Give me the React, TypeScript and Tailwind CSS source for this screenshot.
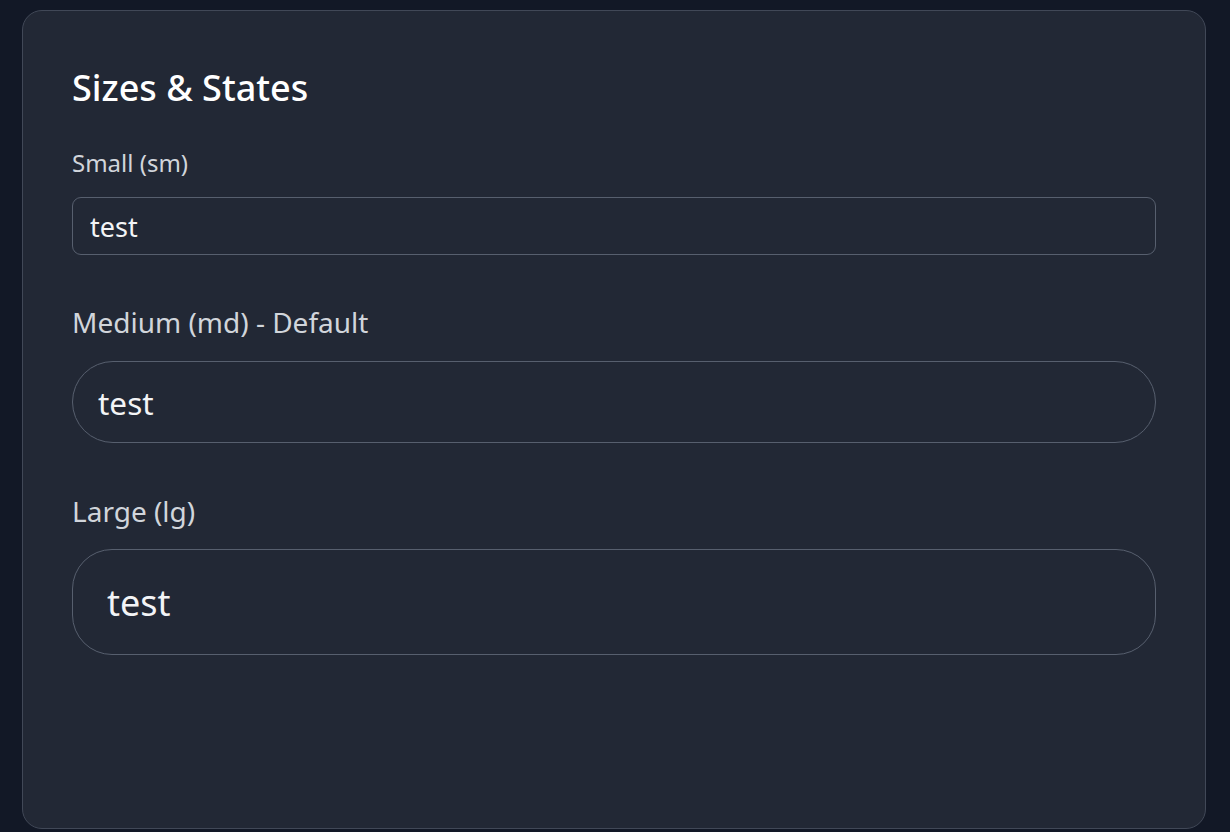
export default function App() {
  const font = { fontFamily: '"Noto Sans", "Open Sans", sans-serif' };

  return (
    <div className="min-h-screen bg-[#121826] pl-[22px] pr-[24px] pt-[10px]" style={font}>
      <section className="h-[819px] rounded-[20px] border-[1.5px] border-[#414857] bg-[#222835] px-[49px] pt-[50px]">
        <h2 className="text-[36px] leading-[54px] font-medium text-white">Sizes &amp; States</h2>

        <div className="mt-[30px] flex flex-col gap-[46px]">
          {/* Small */}
          <div className="flex flex-col gap-[16px]">
            <label className="text-[24px] leading-[36px] text-[#d1d5db]">Small (sm)</label>
            <input
              defaultValue="test"
              className="h-[58px] w-full rounded-[9px] border-[1.5px] border-[#575f6e] bg-transparent px-[17px] text-[27px] text-[#f3f4f6] outline-none"
            />
          </div>

          {/* Medium */}
          <div className="flex flex-col gap-[18px]">
            <label className="text-[28px] leading-[42px] text-[#d1d5db]">Medium (md) - Default</label>
            <input
              defaultValue="test"
              className="h-[82px] w-full rounded-full border-[1.5px] border-[#575f6e] bg-transparent px-[25px] text-[31.5px] text-[#f3f4f6] outline-none"
            />
          </div>

          {/* Large */}
          <div className="mt-[1px] flex flex-col gap-[17px]">
            <label className="text-[28px] leading-[42px] text-[#d1d5db]">Large (lg)</label>
            <input
              defaultValue="test"
              className="h-[106px] w-full rounded-[40px] border-[1.5px] border-[#575f6e] bg-transparent px-[34px] text-[36px] text-[#f3f4f6] outline-none"
            />
          </div>
        </div>
      </section>
    </div>
  );
}
